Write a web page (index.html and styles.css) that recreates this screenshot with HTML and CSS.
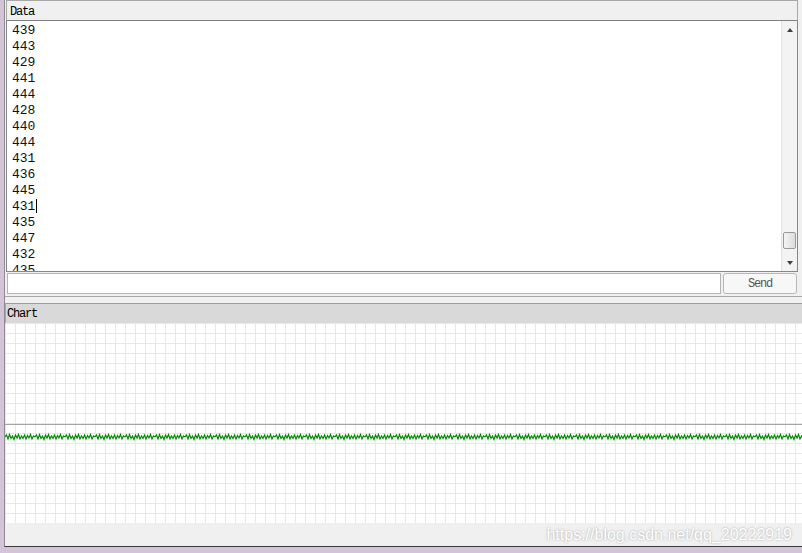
FILE: index.html
```html
<!DOCTYPE html>
<html>
<head>
    <meta http-equiv="Content-Type" content="text/html; charset=utf-8">
    <title>Serial</title>
    <link rel="stylesheet" href="styles.css">
</head>
<body>
    <div class="win">
        <div class="data">
            <div class="panel-head">Data</div>
            <div class="log">
                <div class="lines">
                    <div>439</div>
                    <div>443</div>
                    <div>429</div>
                    <div>441</div>
                    <div>444</div>
                    <div>428</div>
                    <div>440</div>
                    <div>444</div>
                    <div>431</div>
                    <div>436</div>
                    <div>445</div>
                    <div>431<span class="caret"></span></div>
                    <div>435</div>
                    <div>447</div>
                    <div>432</div>
                    <div>435</div>
                </div>
                <!-- scrollbar -->
                <div class="vscroll">
                    <div class="arrow up"></div>
                    <div class="track"><div class="thumb"></div></div>
                    <div class="arrow down"></div>
                </div>
            </div>
            <div class="send-row">
                <input class="send-input" type="text">
                <button class="send-btn">Send</button>
            </div>
        </div>
        <div class="band"></div>
        <div class="chart-head">Chart</div>
        <div class="chart">
            <div class="axis"></div>
            <svg class="wave" width="100%" height="12">
                <defs>
                    <pattern id="zig" patternUnits="userSpaceOnUse" width="30" height="12">
                        <path d="M0 6 L1.5 4 L3 8 L4.5 3.5 L6 7.5 L7.5 5 L9 8.5 L10.5 4 L12 7 L13.5 3.5 L15 8 L16.5 5 L18 7.5 L19.5 4 L21 8 L22.5 4.5 L24 7 L25.5 3.5 L27 8 L28.5 5 L30 6" fill="none" stroke="#008a00" stroke-width="1.2"/>
                    </pattern>
                </defs>
                <rect x="0" y="0" width="100%" height="12" fill="url(#zig)"/>
            </svg>
        </div>
        <div class="foot"></div>
        <div class="watermark">https://blog.csdn.net/qq_20222919</div>
    </div>
</body>
</html>
```

FILE: styles.css
```css
*{box-sizing:border-box;}
body{margin:0; height:553px; overflow:hidden; background:#d4c4d9; font-family:"Liberation Mono", monospace;}

.win{margin-left:4px; height:547px; background:#f0f0f0; border-left:1px solid #8c8c8c; border-bottom:1px solid #3a3a3a;
    display:flex; flex-direction:column; position:relative;}

/* data panel */
.data{margin:0 4px 0 1px;}
.panel-head{height:21px; border:1px solid #a8a8a8; border-bottom-color:#808080; background:#f0f0f0;
    font-size:12px; letter-spacing:-1.2px; line-height:19px; padding:2px 0 0 3px; color:#000;}
.log{height:251px; display:flex; background:#fff; border:1px solid #828790; border-top:0;}
.lines{flex:1; overflow:hidden; padding:2px 0 0 5px; font-size:13px; line-height:16px; color:#111;}
.caret{display:inline-block; width:1px; height:14px; background:#000; vertical-align:-3px; margin-left:1px;}

.vscroll{width:16px; display:flex; flex-direction:column; background:#f3f3f3; border-left:1px solid #e2e2e2;}
.arrow{height:17px; display:flex; align-items:center; justify-content:center;}
.arrow:before{content:""; border-left:3.5px solid transparent; border-right:3.5px solid transparent;}
.up:before{border-bottom:4px solid #404040;}
.down:before{border-top:4px solid #404040;}
.track{flex:1; display:flex; flex-direction:column; justify-content:flex-end; padding-bottom:5px;}
.thumb{height:17px; margin:0 1px; border:1px solid #9a9a9a; border-radius:2px; background:linear-gradient(90deg,#f4f4f4,#dcdcdc);}

.send-row{display:flex; gap:1px; padding:1px 1px 0 1px;}
.send-input{flex:1; height:21px; margin:0; border:1px solid #b5b5b5; background:#fff; outline:none;}
.send-btn{width:74px; height:21px; margin:0 0 0 1px; padding:0; border:1px solid #b8b8b8; border-radius:3px; background:#f7f7f7;
    font-family:"Liberation Mono", monospace; font-size:12px; letter-spacing:-1.2px; color:#555;}

.band{margin-top:2px; height:7px; border-top:1px solid #a8a8a8;}

/* chart */
.chart-head{height:20px; border-top:1px solid #9c9c9c; border-left:1px solid #a8a8a8; background:#d9d9d9; padding:2px 0 0 1px;
    font-size:12px; letter-spacing:-1.2px; line-height:17px; color:#000;}
.chart{height:200px; position:relative; background-color:#fff;
    background-image:linear-gradient(90deg,#e8e8e8 1px,transparent 1px), linear-gradient(#e8e8e8 1px,transparent 1px);
    background-size:10px 10px;}
.axis{position:absolute; left:0; right:0; top:101px; height:1px; background:#a4a4a4;}
.wave{position:absolute; left:0; top:108px; display:block;}

.foot{flex:1;}
.watermark{position:absolute; right:10px; bottom:2px; font-family:"Liberation Sans", Arial, sans-serif; font-size:16px; line-height:18px;
    color:#fff; text-shadow:0 0 2px rgba(0,0,0,0.35);}
```
